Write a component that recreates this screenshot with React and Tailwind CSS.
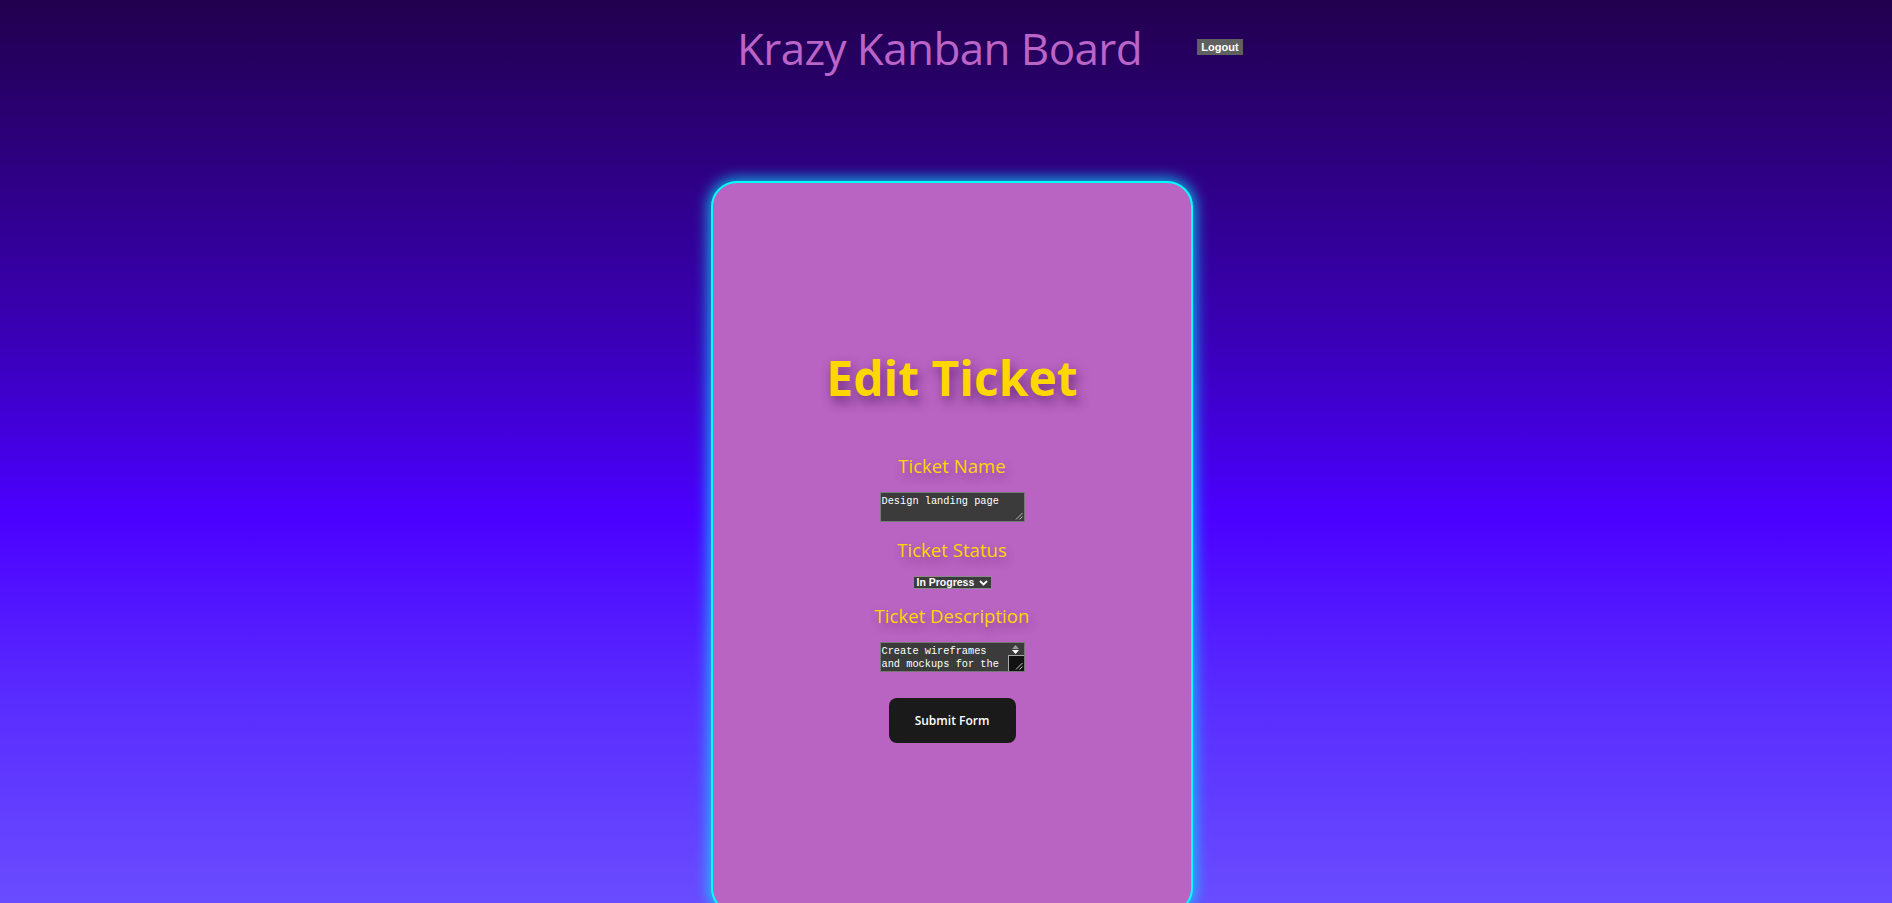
import React from "react";

function Grip({ color = "#bdbdbd" }) {
  return (
    <svg width="8" height="8" viewBox="0 0 8 8" className="block">
      <line x1="7.5" y1="1" x2="1" y2="7.5" stroke={color} strokeWidth="1" />
      <line x1="7.5" y1="4.5" x2="4.5" y2="7.5" stroke={color} strokeWidth="1" />
    </svg>
  );
}

export default function App() {
  const labelCls =
    "h-[24px] leading-[24px] text-[18.6px] text-[#ffd700] font-['Open_Sans',sans-serif] [text-shadow:2px_5px_10px_rgba(60,0,80,0.35)] whitespace-nowrap";
  return (
    <div className="h-screen w-full overflow-hidden bg-[linear-gradient(180deg,#22004e_0%,#3a00b8_38%,#4b00ff_57%,#5a2dff_78%,#6a4cff_100%)]">
      <header className="flex items-start pl-[737px]">
        <h1 className="mt-[18px] w-[404px] text-center whitespace-nowrap text-[44px] tracking-[-0.6px] leading-[61px] font-normal text-[#b964c6] font-['Open_Sans',sans-serif]">
          Krazy Kanban Board
        </h1>
        <button className="ml-[56px] mt-[39px] h-[16px] w-[46px] bg-[#606060] text-white text-[11px] leading-[16px] font-bold font-['Liberation_Sans',Arial,sans-serif]">
          Logout
        </button>
      </header>

      <main className="flex justify-center pl-[12px] mt-[102px]">
        <div className="h-[733px] w-[482px] shrink-0 rounded-[26px] border-2 border-[#00ffff] bg-[#b963c2] shadow-[0_0_14px_3px_rgba(0,230,255,0.75)] flex flex-col items-center pt-[165px]">
          <h2 className="h-[60px] leading-[60px] text-[48px] font-bold text-[#ffd700] font-['Open_Sans',sans-serif] [text-shadow:3px_6px_12px_rgba(50,0,70,0.55)] whitespace-nowrap">
            Edit Ticket
          </h2>

          <label className={`mt-[46px] ${labelCls}`}>Ticket Name</label>
          <div className="relative mt-[14px]">
            <textarea
              readOnly
              value="Design landing page"
              className="block h-[30px] w-[145px] resize-none overflow-hidden border border-[#777777] bg-[#3b3b3b] px-[1px] pt-[2px] text-[10.3px] leading-[12.5px] text-white font-['Liberation_Mono',monospace] outline-none"
            />
            <div className="absolute right-[2px] bottom-[2px]">
              <Grip />
            </div>
          </div>

          <label className={`mt-[16px] ${labelCls}`}>Ticket Status</label>
          <div className="mt-[14px] flex h-[13px] w-[79px] items-center justify-between border border-[#8a8a8a] bg-[#3b3b3b] pl-[3px] pr-[3px] text-[10.5px] leading-[11px] font-bold text-white font-['Liberation_Sans',Arial,sans-serif]">
            <span>In Progress</span>
            <svg width="9" height="6" viewBox="0 0 9 6">
              <path d="M1 1 L4.5 4.5 L8 1" fill="none" stroke="white" strokeWidth="1.8" />
            </svg>
          </div>

          <label className={`mt-[15px] ${labelCls}`}>Ticket Description</label>
          <div className="relative mt-[14px]">
            <textarea
              readOnly
              value="Create wireframes and mockups for the landing page."
              className="block h-[30px] w-[145px] resize-none overflow-hidden border border-[#777777] bg-[#3b3b3b] pl-[1px] pr-[16px] pt-[2px] text-[10.3px] leading-[12.5px] text-white font-['Liberation_Mono',monospace] outline-none"
            />
            <div className="absolute right-[1px] top-[1px] bottom-[1px] w-[16px] flex flex-col bg-[#3b3b3b]">
              <div className="h-[12px] flex flex-col items-center justify-center gap-[1px]">
                <svg width="7" height="4" viewBox="0 0 7 4">
                  <path d="M0 4 L3.5 0 L7 4 Z" fill="#9a9a9a" />
                </svg>
                <svg width="7" height="4" viewBox="0 0 7 4">
                  <path d="M0 0 L7 0 L3.5 4 Z" fill="#ffffff" />
                </svg>
              </div>
              <div className="flex-1 border-l border-t border-[#a8a8a8] bg-[#121212] flex items-end justify-end pr-[1px] pb-[1px]">
                <Grip color="#c8c8c8" />
              </div>
            </div>
          </div>

          <button className="mt-[26px] h-[45px] w-[127px] rounded-[8px] bg-[#1a1a1a] text-white text-[12px] font-semibold font-['Open_Sans',sans-serif]">
            Submit Form
          </button>
        </div>
      </main>
    </div>
  );
}
